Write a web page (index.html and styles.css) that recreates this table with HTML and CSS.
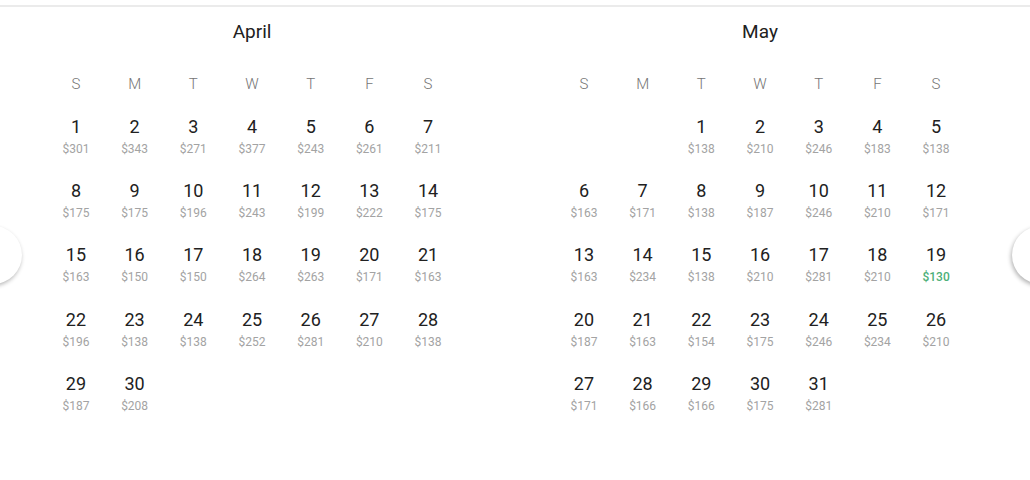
FILE: index.html
```html
<!DOCTYPE html>
<html lang="en">
<head>
<meta charset="UTF-8">
<meta name="viewport" content="width=device-width, initial-scale=1.0">
<title>Fare Calendar</title>
<link rel="stylesheet" href="styles.css">
</head>
<body>
<div class="top-rule"></div>

<div class="calendar">
  <div class="month" id="april">
    <h3 class="month-title">April</h3>
    <div class="weekdays">
      <span>S</span><span>M</span><span>T</span><span>W</span><span>T</span><span>F</span><span>S</span>
    </div>
    <div class="days"></div>
  </div>
  <div class="month" id="may">
    <h3 class="month-title">May</h3>
    <div class="weekdays">
      <span>S</span><span>M</span><span>T</span><span>W</span><span>T</span><span>F</span><span>S</span>
    </div>
    <div class="days"></div>
  </div>
</div>

<!-- Prev / next buttons -->
<button class="nav-button prev" aria-label="Previous"></button>
<button class="nav-button next" aria-label="Next"></button>

<script>
  // Fare data per month
  const months = {
    april: {
      offset: 0,
      prices: [301, 343, 271, 377, 243, 261, 211,
               175, 175, 196, 243, 199, 222, 175,
               163, 150, 150, 264, 263, 171, 163,
               196, 138, 138, 252, 281, 210, 138,
               187, 208]
    },
    may: {
      offset: 2,
      cheapest: 19,
      prices: [138, 210, 246, 183, 138,
               163, 171, 138, 187, 246, 210, 171,
               163, 234, 138, 210, 281, 210, 130,
               187, 163, 154, 175, 246, 234, 210,
               171, 166, 166, 175, 281]
    }
  };

  Object.keys(months).forEach((id) => {
    const month = months[id];
    const grid = document.querySelector('#' + id + ' .days');

    for (let i = 0; i < month.offset; i++) {
      const blank = document.createElement('div');
      blank.className = 'day';
      grid.appendChild(blank);
    }

    month.prices.forEach((price, i) => {
      const day = document.createElement('div');
      day.className = 'day';
      if (month.cheapest === i + 1) day.classList.add('cheapest');

      const num = document.createElement('div');
      num.className = 'day-number';
      num.textContent = i + 1;

      const fare = document.createElement('div');
      fare.className = 'day-price';
      fare.textContent = '$' + price;

      day.appendChild(num);
      day.appendChild(fare);
      grid.appendChild(day);
    });
  });
</script>
</body>
</html>
```

FILE: styles.css
```css
:root {
  --text-color: #212121;
  --muted-color: #757575;
  --price-color: #a3a3a3;
  --cheap-color: #4caf78;
  --rule-color: #ebebeb;
}

body {
  font-family: Roboto, "Noto Sans", Arial, sans-serif;
  color: var(--text-color);
  margin: 0;
  padding: 0;
  background: #fff;
  overflow: hidden;
  height: 480px;
  position: relative;
}

.top-rule {
  margin-top: 5px;
  border-top: 2px solid var(--rule-color);
}

.calendar {
  display: flex;
  gap: 4px;
}

.month {
  width: 504px;
}

.month-title {
  margin: 0;
  padding-top: 13px;
  font-size: 19px;
  font-weight: 400;
  line-height: 24px;
  text-align: center;
}

.weekdays,
.days {
  display: grid;
  grid-template-columns: repeat(7, 58.7px);
  justify-content: center;
}

.weekdays {
  margin-top: 30px;
  font-size: 15px;
  font-weight: 300;
  line-height: 20px;
  color: var(--muted-color);
  text-align: center;
}

.days {
  margin-top: 21px;
  grid-auto-rows: 64.2px;
}

.day {
  text-align: center;
}

.day-number {
  font-size: 18px;
  line-height: 24px;
}

.day-price {
  font-size: 12px;
  line-height: 20px;
  color: var(--price-color);
}

.cheapest .day-price {
  color: var(--cheap-color);
  font-weight: 500;
}

.nav-button {
  position: absolute;
  top: 226px;
  width: 58px;
  height: 58px;
  border: none;
  border-radius: 50%;
  background: #fff;
  box-shadow: -1px 2px 4px rgba(0, 0, 0, 0.3);
  cursor: pointer;
  padding: 0;
}

.prev {
  left: -36px;
}

.next {
  right: -40px;
}
```
